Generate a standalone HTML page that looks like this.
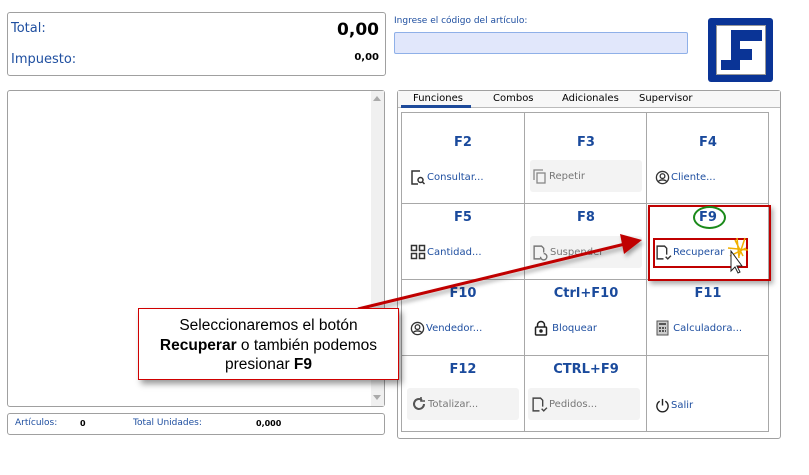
<!DOCTYPE html>
<html><head><meta charset="utf-8"><style>
*{box-sizing:border-box;margin:0;padding:0}
body{width:809px;height:475px;background:#fff;position:relative;overflow:hidden;font-family:"Liberation Sans","DejaVu Sans",sans-serif}
.a{position:absolute}
.box{position:absolute;border:1px solid #a0a0a0;border-radius:3px;background:#fff}
.lbl{color:#1f4fa0}
.fk{position:absolute;width:122px;text-align:center;font:bold 13px "DejaVu Sans",sans-serif;color:#1a4a9c}
.bt{position:absolute;font:10px "DejaVu Sans",sans-serif;color:#1f4fa0;display:flex;align-items:center;gap:1px}
.dis{background:#f3f3f3;border-radius:3px;color:#777}
.vl{position:absolute;width:1px;background:#a8a8a8}
.hl{position:absolute;height:1px;background:#a8a8a8}
</style></head><body>
<div class="box" style="left:7px;top:12px;width:379px;height:64px"></div>
<div class="a lbl" style="left:11px;top:21px;font:13px 'DejaVu Sans',sans-serif">Total:</div>
<div class="a lbl" style="left:11px;top:52px;font:13px 'DejaVu Sans',sans-serif">Impuesto:</div>
<div class="a" style="right:430px;top:20px;font:bold 17px 'DejaVu Sans',sans-serif">0,00</div>
<div class="a" style="right:430px;top:52px;font:bold 10px 'DejaVu Sans',sans-serif">0,00</div>

<div class="a lbl" style="left:394px;top:16px;font:9px 'DejaVu Sans',sans-serif">Ingrese el código del artículo:</div>
<div class="a" style="left:394px;top:32px;width:294px;height:22px;background:#e1e7fb;border:1px solid #8fb0e8;border-radius:2px"></div>

<div class="a" style="left:708px;top:18px;width:65px;height:64px;background:#0a3496;border-radius:3px"></div>
<div class="a" style="left:716px;top:25px;width:50px;height:50px;background:#fff;border:1px solid #999"></div>
<div class="a" style="left:731px;top:30px;width:31px;height:11px;background:#0a3496"></div>
<div class="a" style="left:731px;top:30px;width:9px;height:40px;background:#0a3496"></div>
<div class="a" style="left:731px;top:49px;width:21px;height:11px;background:#0a3496"></div>
<div class="a" style="left:721px;top:60px;width:19px;height:10px;background:#0a3496"></div>

<div class="box" style="left:7px;top:90px;width:378px;height:317px"></div>
<div class="a" style="left:371px;top:91px;width:13px;height:315px;background:#f0f0f0"></div>
<div class="a" style="left:373px;top:96px;width:0;height:0;border-left:4px solid transparent;border-right:4px solid transparent;border-bottom:5px solid #aaa"></div>
<div class="a" style="left:373px;top:395px;width:0;height:0;border-left:4px solid transparent;border-right:4px solid transparent;border-top:5px solid #aaa"></div>

<div class="box" style="left:7px;top:413px;width:378px;height:22px"></div>
<div class="a lbl" style="left:15px;top:418px;font:9px 'DejaVu Sans',sans-serif">Artículos:</div>
<div class="a" style="left:80px;top:419px;font:bold 8px 'DejaVu Sans',sans-serif">0</div>
<div class="a lbl" style="left:133px;top:418px;font:9px 'DejaVu Sans',sans-serif">Total Unidades:</div>
<div class="a" style="left:256px;top:419px;font:bold 8px 'DejaVu Sans',sans-serif">0,000</div>

<div class="box" style="left:397px;top:90px;width:384px;height:349px"></div>
<div class="a" style="left:398px;top:91px;width:382px;height:17px;background:#f7f7f7;border-bottom:1px solid #bbb"></div>
<div class="a" style="left:413px;top:93px;font:10px 'DejaVu Sans',sans-serif">Funciones</div>
<div class="a" style="left:401px;top:105px;width:70px;height:3px;background:#1d4a9a"></div>
<div class="a" style="left:493px;top:93px;font:10px 'DejaVu Sans',sans-serif">Combos</div>
<div class="a" style="left:562px;top:93px;font:10px 'DejaVu Sans',sans-serif">Adicionales</div>
<div class="a" style="left:639px;top:93px;font:10px 'DejaVu Sans',sans-serif">Supervisor</div>

<div class="vl" style="left:401px;top:112px;height:320px"></div>
<div class="vl" style="left:524px;top:112px;height:320px"></div>
<div class="vl" style="left:646px;top:112px;height:320px"></div>
<div class="vl" style="left:768px;top:112px;height:320px"></div>
<div class="hl" style="left:401px;top:112px;width:368px"></div>
<div class="hl" style="left:401px;top:203px;width:368px"></div>
<div class="hl" style="left:401px;top:279px;width:368px"></div>
<div class="hl" style="left:401px;top:355px;width:368px"></div>
<div class="hl" style="left:401px;top:431px;width:368px"></div>

<div class="fk" style="left:402px;top:135px">F2</div>
<div class="fk" style="left:525px;top:135px">F3</div>
<div class="fk" style="left:647px;top:135px">F4</div>
<div class="fk" style="left:402px;top:210px">F5</div>
<div class="fk" style="left:525px;top:210px">F8</div>
<div class="fk" style="left:647px;top:210px">F9</div>
<div class="fk" style="left:402px;top:286px">F10</div>
<div class="fk" style="left:525px;top:286px">Ctrl+F10</div>
<div class="fk" style="left:647px;top:286px">F11</div>
<div class="fk" style="left:402px;top:362px">F12</div>
<div class="fk" style="left:525px;top:362px">CTRL+F9</div>

<div class="bt" style="left:410px;top:168px;height:18px"><svg width="16" height="16" viewBox="0 0 16 16" fill="none" stroke="#333" stroke-width="1.5"><path d="M10 2H2v13h6"/><circle cx="10.5" cy="11" r="2.5"/><path d="M12.5 13l2 2"/></svg>Consultar...</div>
<div class="bt dis" style="left:530px;top:160px;width:112px;height:32px;padding-left:2px"><svg width="16" height="16" viewBox="0 0 16 16" fill="none" stroke="#888" stroke-width="1.3"><path d="M2 12V2h9"/><rect x="5" y="5" width="8" height="10"/></svg>Repetir</div>
<div class="bt" style="left:655px;top:168px;height:18px"><svg width="15" height="15" viewBox="0 0 16 16" fill="none" stroke="#333" stroke-width="1.4"><circle cx="8" cy="8" r="6.5"/><circle cx="8" cy="6.5" r="2.5"/><path d="M3.5 12.5c1.5-2.5 7.5-2.5 9 0"/></svg>Cliente...</div>

<div class="bt" style="left:410px;top:243px;height:18px"><svg width="16" height="16" viewBox="0 0 16 16" fill="none" stroke="#333" stroke-width="1.5"><rect x="1.5" y="1.5" width="5" height="5"/><rect x="9.5" y="1.5" width="5" height="5"/><rect x="1.5" y="9.5" width="5" height="5"/><rect x="9.5" y="9.5" width="5" height="5"/></svg>Cantidad...</div>
<div class="bt dis" style="left:530px;top:236px;width:112px;height:32px;padding-left:2px"><svg width="17" height="17" viewBox="0 0 16 16" fill="none" stroke="#777" stroke-width="1.3"><path d="M8 14H2V2h7l2 2v4"/><path d="M8 12a3 3 0 1 0 3-3"/></svg>Suspender</div>
<div class="bt" style="left:655px;top:243px;height:18px"><svg width="17" height="17" viewBox="0 0 16 16" fill="none" stroke="#333" stroke-width="1.3"><path d="M8 14H2V2h7l2 2v6"/><path d="M10 12l2 2 3-3"/></svg>Recuperar</div>

<div class="bt" style="left:410px;top:319px;height:18px"><svg width="15" height="15" viewBox="0 0 16 16" fill="none" stroke="#333" stroke-width="1.4"><circle cx="8" cy="8" r="6.5"/><circle cx="8" cy="6.5" r="2.5"/><path d="M3.5 12.5c1.5-2.5 7.5-2.5 9 0"/></svg>Vendedor...</div>
<div class="bt" style="left:534px;top:319px;height:18px"><svg width="14" height="16" viewBox="0 0 14 16" fill="none" stroke="#222" stroke-width="1.5"><path d="M3.5 7V5a3.5 3.5 0 0 1 7 0v2"/><rect x="1.5" y="7" width="11" height="8" rx="1"/><circle cx="7" cy="11" r="1" fill="#222"/></svg>&nbsp;Bloquear</div>
<div class="bt" style="left:656px;top:319px;height:18px"><svg width="13" height="16" viewBox="0 0 13 16"><rect x="1" y="1" width="11" height="14" fill="#ccc" stroke="#555"/><rect x="3" y="3" width="7" height="2" fill="#555"/><path d="M3 7h2v2H3zM6 7h2v2H6zM9 7h1v2H9zM3 10h2v2H3zM6 10h2v2H6zM9 10h1v2H9z" fill="#555"/></svg>&nbsp;Calculadora...</div>

<div class="bt dis" style="left:407px;top:388px;width:112px;height:32px;padding-left:4px"><svg width="16" height="16" viewBox="0 0 16 16" fill="none" stroke="#555" stroke-width="2"><path d="M13 8a5 5 0 1 1-2-4"/><path d="M10 1v4h4" stroke-width="1.6"/></svg>Totalizar...</div>
<div class="bt dis" style="left:528px;top:388px;width:112px;height:32px;padding-left:3px"><svg width="17" height="17" viewBox="0 0 16 16" fill="none" stroke="#444" stroke-width="1.3"><path d="M8 14H2V2h7l2 2v6"/><path d="M10 12l2 2 3-3"/></svg>Pedidos...</div>
<div class="bt" style="left:655px;top:396px;height:18px"><svg width="15" height="15" viewBox="0 0 16 16" fill="none" stroke="#222" stroke-width="1.5"><path d="M5 3.5a6 6 0 1 0 6 0"/><path d="M8 1v7"/></svg>Salir</div>

<!-- annotations -->
<div class="a" style="left:648px;top:205px;width:123px;height:76px;border:2px solid #c00000;box-shadow:2px 3px 5px rgba(0,0,0,.35)"></div>
<div class="a" style="left:653px;top:238px;width:95px;height:30px;border:2px solid #c00000"></div>
<div class="a" style="left:693px;top:206px;width:33px;height:23px;border:2px solid #1a8a1a;border-radius:50%"></div>
<svg class="a" style="left:0;top:0" width="809" height="475">
<defs><filter id="sh"><feDropShadow dx="2" dy="3" stdDeviation="2" flood-opacity=".35"/></filter></defs>
<g filter="url(#sh)"><line x1="358" y1="309" x2="625" y2="244" stroke="#c00000" stroke-width="3"/><polygon points="642,240 620,234 624,254" fill="#c00000"/></g>
<g stroke="#f0b000" stroke-width="1.5"><path d="M735 240l8 16M745 238l-6 18M728 248l20 2M730 256l16-8M737 238l2 20"/></g>
<path d="M731 251v20l4-4 3 6 2-1-3-6h5z" fill="#fff" stroke="#222" stroke-width="1"/>
</svg>
<div class="a" style="left:138px;top:308px;width:261px;height:72px;border:1px solid #d00000;background:#fff;box-shadow:3px 4px 6px rgba(0,0,0,.4);text-align:center;font:15.5px 'Liberation Sans',sans-serif;line-height:19.5px;padding-top:7px;color:#000;white-space:nowrap">Seleccionaremos el botón<br><b>Recuperar</b> o también podemos<br>presionar <b>F9</b></div>
</body></html>
